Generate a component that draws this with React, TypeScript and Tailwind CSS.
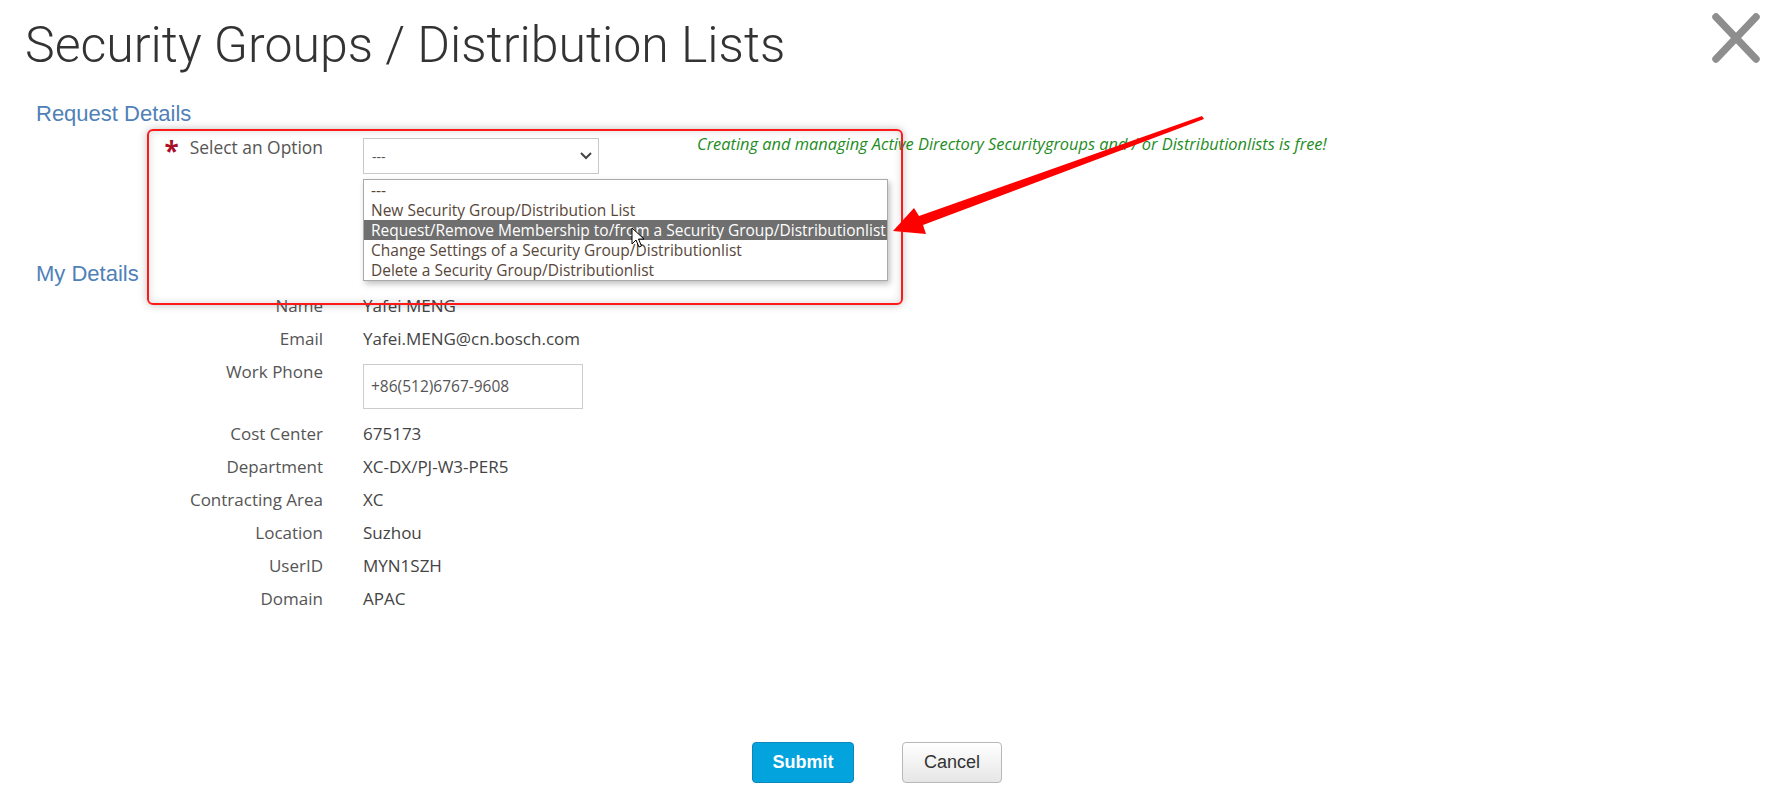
import React from "react";

const rows: { label: string; value: string }[] = [
  { label: "Cost Center", value: "675173" },
  { label: "Department", value: "XC-DX/PJ-W3-PER5" },
  { label: "Contracting Area", value: "XC" },
  { label: "Location", value: "Suzhou" },
  { label: "UserID", value: "MYN1SZH" },
  { label: "Domain", value: "APAC" },
];

const options = [
  "---",
  "New Security Group/Distribution List",
  "Request/Remove Membership to/from a Security Group/Distributionlist",
  "Change Settings of a Security Group/Distributionlist",
  "Delete a Security Group/Distributionlist",
];

function Row({ label, children }: { label: string; children: React.ReactNode }) {
  return (
    <div className="flex h-[33px] items-center">
      <div className="w-[323px] text-right text-[#555] leading-[33px]">{label}</div>
      <div className="ml-[40px] text-[#444] leading-[33px]">{children}</div>
    </div>
  );
}

export default function App() {
  return (
    <div
      className="relative w-[1776px] h-[804px] bg-white overflow-hidden"
      style={{ fontFamily: '"Open Sans", "Noto Sans", sans-serif' }}
    >
      {/* Header */}
      <header className="flex justify-between items-start pl-[25px] pr-[16px] pt-[13px]">
        <h1
          className="mt-[3px] text-[50px] leading-[58px] font-light text-[#333]"
          style={{ fontFamily: "Roboto, sans-serif" }}
        >
          Security Groups / Distribution Lists
        </h1>
        <button className="w-[48px] h-[50px]" aria-label="close">
          <svg width="48" height="50" viewBox="0 0 48 50">
            <line x1="4" y1="4" x2="44" y2="46" stroke="#8e8e8e" strokeWidth="7.5" strokeLinecap="round" />
            <line x1="44" y1="4" x2="4" y2="46" stroke="#8e8e8e" strokeWidth="7.5" strokeLinecap="round" />
          </svg>
        </button>
      </header>

      {/* Request Details */}
      <h2
        className="mt-[27px] pl-[36px] text-[22px] leading-[26px] text-[#4f81b8]"
        style={{ fontFamily: '"Liberation Sans", Arial, sans-serif' }}
      >
        Request Details
      </h2>

      <div className="mt-[10px] flex items-start text-[17px]">
        <div className="w-[323px] flex justify-end items-start leading-[20px] text-[#555]">
          <span className="mr-[11px] text-[26px] leading-[20px] mt-[4px] text-[#a8102a] font-bold">*</span>
          <span className="text-[17.4px]">Select an Option</span>
        </div>
        <div className="ml-[40px] mt-[1px] w-[236px] h-[36px] border border-[#c8c8c8] flex items-center justify-between pl-[8px] pr-[6px] text-[14px] text-[#555]">
          <span>---</span>
          <svg width="12" height="8" viewBox="0 0 12 8">
            <polyline points="1,1 6,6 11,1" fill="none" stroke="#444" strokeWidth="2" />
          </svg>
        </div>
        <div className="ml-[98px] mt-[-3px] text-[16.4px] leading-[20px] italic text-[#1e8c1e] whitespace-nowrap">
          Creating and managing Active Directory Securitygroups and / or Distributionlists is free!
        </div>
      </div>

      {/* My Details */}
      <h2
        className="mt-[87px] pl-[36px] text-[22px] leading-[26px] text-[#4f81b8]"
        style={{ fontFamily: '"Liberation Sans", Arial, sans-serif' }}
      >
        My Details
      </h2>

      <div className="mt-[2px] text-[17px]">
        <Row label="Name">Yafei MENG</Row>
        <Row label="Email">Yafei.MENG@cn.bosch.com</Row>
        <div className="flex h-[62px] items-start">
          <div className="w-[323px] text-right text-[#555] leading-[33px]">Work Phone</div>
          <div className="ml-[40px] mt-[9px] w-[220px] h-[45px] border border-[#ccc] flex items-center pl-[7px] text-[15.5px] text-[#555]">
            +86(512)6767-9608
          </div>
        </div>
        {rows.map((r) => (
          <Row key={r.label} label={r.label}>
            {r.value}
          </Row>
        ))}
      </div>

      {/* Buttons */}
      <div
        className="mt-[127px] flex justify-center gap-[48px] pr-[22px]"
        style={{ fontFamily: '"Liberation Sans", Arial, sans-serif' }}
      >
        <button className="w-[102px] h-[41px] rounded-[4px] bg-[#03a3de] border border-[#0a86bb] text-white font-bold text-[18px]">
          Submit
        </button>
        <button className="w-[100px] h-[41px] rounded-[4px] bg-gradient-to-b from-white to-[#e6e6e6] border border-[#b8b8b8] text-[#333] text-[18px]">
          Cancel
        </button>
      </div>

      {/* Native dropdown popup overlay */}
      <div className="absolute left-[363px] top-[179px] w-[525px] border border-[#aaa] bg-white shadow-[2px_3px_6px_rgba(0,0,0,0.25)] text-[15.5px] text-[#57463a]">
        {options.map((o, i) => (
          <div
            key={o}
            className={
              i === 2
                ? "h-[20px] leading-[20px] pl-[7px] bg-[#6f6f6f] text-white whitespace-nowrap"
                : "h-[20px] leading-[20px] pl-[7px] whitespace-nowrap"
            }
          >
            {o}
          </div>
        ))}
      </div>

      {/* Red annotation box */}
      <div className="absolute left-[147px] top-[129px] w-[756px] h-[176px] border-2 border-[#ff1a1a] rounded-[6px] shadow-[0_0_8px_rgba(0,0,0,0.25),inset_0_0_8px_rgba(0,0,0,0.15)] pointer-events-none" />

      {/* Mouse cursor */}
      <svg className="absolute left-[631px] top-[227px]" width="14" height="22" viewBox="0 0 14 22">
        <path d="M1 1 L1 17 L5 13 L8 20 L10.5 19 L7.5 12 L13 12 Z" fill="white" stroke="black" strokeWidth="1" strokeLinejoin="round" />
      </svg>

      {/* Red arrow */}
      <svg className="absolute left-0 top-0 pointer-events-none" width="1776" height="804">
        <polygon points="1202,116 919,216 914,208 893,231 926,234 923,225 1204,119" fill="#ff0000" />
      </svg>
    </div>
  );
}
